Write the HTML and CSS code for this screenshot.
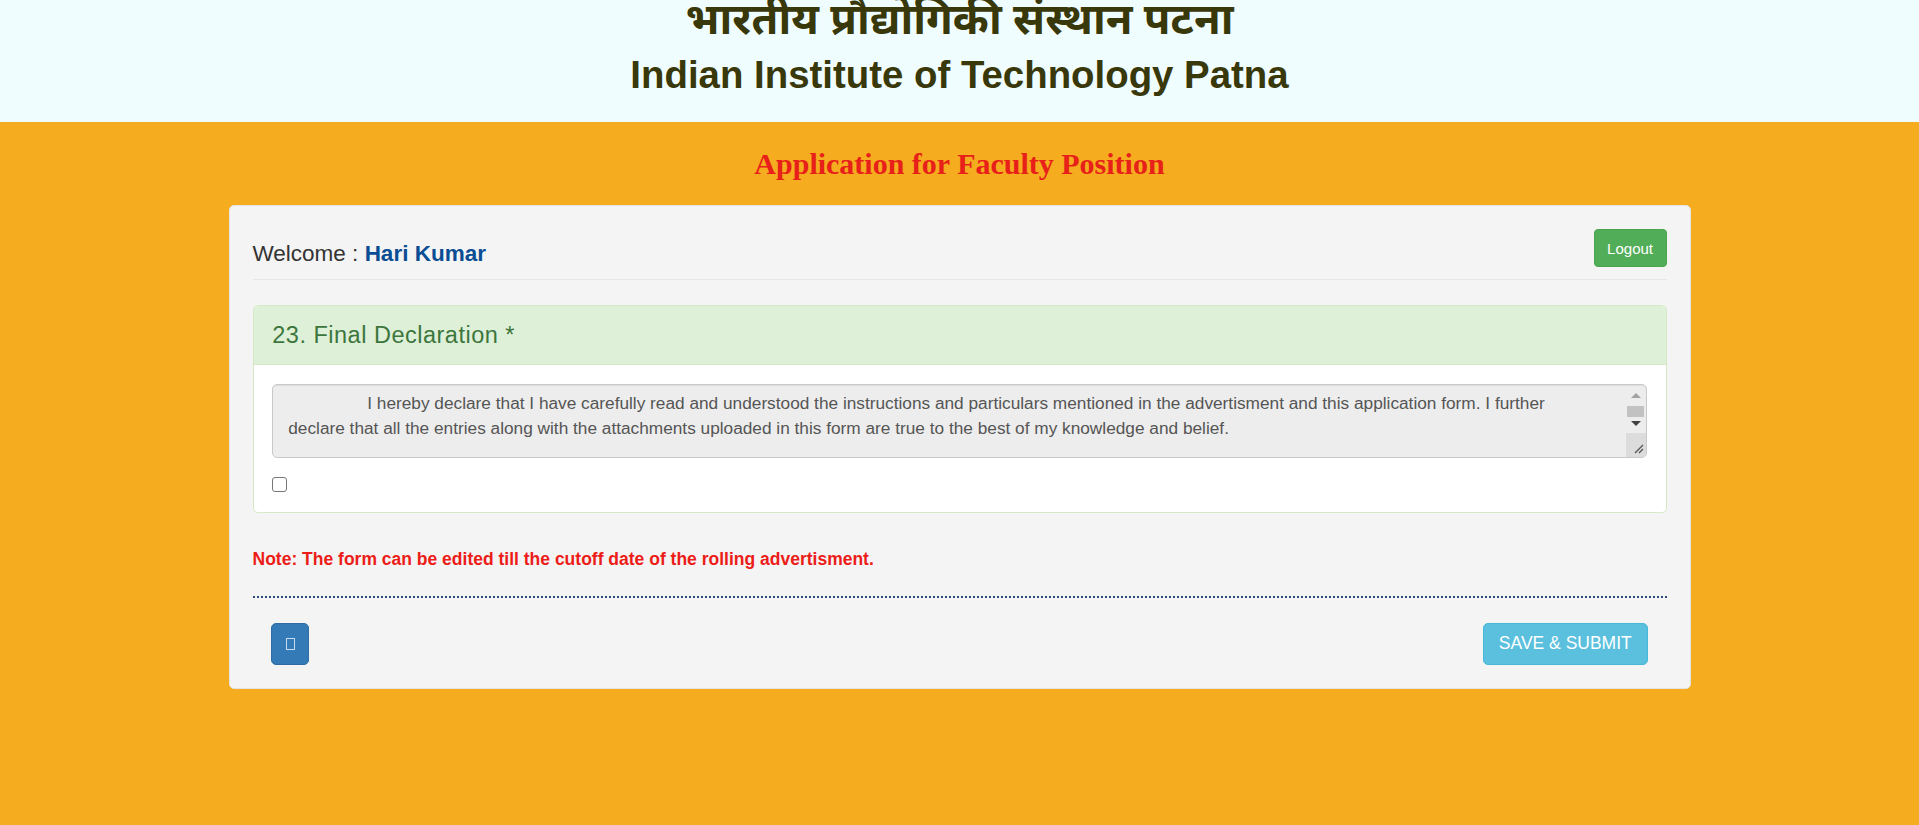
FILE: index.html
```html
<!DOCTYPE html>
<html lang="en">
<head>
<meta charset="utf-8">
<title>Application for Faculty Position - IIT Patna</title>
<link rel="stylesheet" href="styles.css">
</head>
<body>
<header class="top">
  <div class="hindi">भारतीय प्रौद्योगिकी संस्थान पटना</div>
  <div class="eng">Indian Institute of Technology Patna</div>
</header>
<h1 class="title">Application for Faculty Position</h1>
<main class="card">
  <div class="welcome-row">
    <div class="welcome">Welcome : <b class="name">Hari Kumar</b></div>
    <button class="btn-logout">Logout</button>
  </div>
  <hr class="sep">
  <section class="panel">
    <div class="panel-heading">23. Final Declaration *</div>
    <div class="panel-body">
      <div class="ta">
        <div class="ta-text">I hereby declare that I have carefully read and understood the instructions and particulars mentioned in the advertisment and this application form. I further declare that all the entries along with the attachments uploaded in this form are true to the best of my knowledge and belief.</div>
        <div class="ta-scroll">
          <div class="sb-btn sb-up"><span class="tri-up"></span></div>
          <div class="sb-thumb"></div>
          <div class="sb-btn sb-down"><span class="tri-down"></span></div>
          <div class="sb-space"></div>
          <div class="sb-corner">
            <svg width="12" height="12" viewBox="0 0 12 12"><path d="M11 3 L3 11 M11 7 L7 11" stroke="#555" stroke-width="1.3" fill="none"/></svg>
          </div>
        </div>
      </div>
      <input type="checkbox" class="chk">
    </div>
  </section>
  <p class="note">Note: The form can be edited till the cutoff date of the rolling advertisment.</p>
  <div class="dots"></div>
  <div class="actions">
    <button class="btn-back"><span class="tofu"></span></button>
    <button class="btn-save">SAVE &amp; SUBMIT</button>
  </div>
</main>
</body>
</html>
```
FILE: styles.css
```css
html, body {
  margin: 0;
  padding: 0;
}
body {
  background: #f5ac1e;
  font-family: "Liberation Sans", Arial, Helvetica, sans-serif;
  color: #333;
  height: 825px;
  overflow: hidden;
}
.top {
  background: #f0fdff;
  height: 122px;
  text-align: center;
  overflow: hidden;
  color: #38380a;
  font-weight: bold;
}
.hindi {
  font-family: "Noto Sans Devanagari", "Lohit Devanagari", "FreeSans", "Mangal", sans-serif;
  font-size: 43.5px;
  height: 44px;
  line-height: 44px;
  margin-top: 2px;
}
.eng {
  font-size: 38.4px;
  line-height: 37.5px;
  margin-top: 10px;
}
.title {
  margin: 22px 0 21px;
  text-align: center;
  font-family: "Liberation Serif", "Times New Roman", serif;
  font-weight: bold;
  font-size: 30px;
  line-height: 40px;
  color: #e8201a;
}
.card {
  width: 1462px;
  box-sizing: border-box;
  margin: 0 auto;
  background: #f4f4f4;
  border: 1px solid #e3e3e3;
  border-radius: 5px;
  padding: 23px 23px 23px;
}
.welcome-row {
  display: flex;
  justify-content: space-between;
  align-items: center;
  height: 38px;
}
.welcome {
  font-size: 22.5px;
  color: #333;
  padding-top: 11px;
}
.name {
  color: #0a4d94;
}
.btn-logout {
  height: 37.5px;
  padding: 0 12.5px;
  font-family: inherit;
  font-size: 15px;
  color: #fff;
  background: #52ad58;
  border: 1px solid #4aa450;
  border-radius: 4px;
}
.sep {
  margin: 12px 0 25px;
  border: 0;
  border-top: 1px solid #e6e6e6;
  height: 0;
}
.panel {
  background: #fff;
  border: 1px solid #d6e9c6;
  border-radius: 5px;
  overflow: hidden;
}
.panel-heading {
  background: #dff0d8;
  color: #3c763d;
  height: 58px;
  display: flex;
  align-items: center;
  padding: 0 18.75px;
  font-size: 23.5px;
  letter-spacing: 0.5px;
  border-bottom: 1px solid #d6e9c6;
}
.panel-body {
  padding: 18.75px 18.75px 20px;
}
.ta {
  display: flex;
  height: 74px;
  box-sizing: border-box;
  background: #ededed;
  border: 1px solid #c9c9c9;
  border-radius: 5px;
  box-shadow: inset 0 1px 1px rgba(0,0,0,.075);
  overflow: hidden;
}
.ta-text {
  flex: 1;
  padding: 6.5px 40px 0 15px;
  font-size: 17.25px;
  line-height: 25px;
  color: #555;
  text-indent: 79px;
  overflow: hidden;
}
.ta-scroll {
  width: 20px;
  display: flex;
  flex-direction: column;
  align-items: stretch;
}
.sb-btn {
  display: flex;
  align-items: center;
  justify-content: center;
}
.sb-up {
  height: 21px;
}
.sb-down {
  height: 14px;
}
.tri-up {
  width: 0;
  height: 0;
  border-left: 5px solid transparent;
  border-right: 5px solid transparent;
  border-bottom: 5px solid #a3a3a3;
}
.tri-down {
  width: 0;
  height: 0;
  border-left: 5px solid transparent;
  border-right: 5px solid transparent;
  border-top: 5px solid #404040;
}
.sb-thumb {
  height: 11px;
  margin: 0 2px 0 1px;
  background: #c2c2c2;
}
.sb-space {
  flex: 1;
}
.sb-corner {
  height: 21px;
  background: #dcdcdc;
  display: flex;
  align-items: flex-end;
  justify-content: flex-end;
  padding: 0 2px 3px 0;
}
.chk {
  appearance: none;
  -webkit-appearance: none;
  display: block;
  width: 15px;
  height: 15px;
  margin: 19px 0 0;
  border: 1.5px solid #767676;
  border-radius: 3px;
  background: #fff;
  box-sizing: border-box;
}
.note {
  margin: 34px 0 0;
  font-size: 17.5px;
  line-height: 25px;
  font-weight: bold;
  color: #ec1c18;
}
.dots {
  margin-top: 24px;
  border-top: 2px dotted #2d4a7a;
}
.actions {
  display: flex;
  justify-content: space-between;
  align-items: center;
  padding: 0 18.75px;
  margin-top: 25px;
}
.btn-back {
  width: 38px;
  height: 42px;
  background: #337ab7;
  border: 1px solid #2e6da4;
  border-radius: 5px;
  display: flex;
  align-items: center;
  justify-content: center;
  padding: 0;
}
.tofu {
  width: 9px;
  height: 12px;
  box-sizing: border-box;
  border: 1.5px solid #c6dcf2;
}
.btn-save {
  height: 42px;
  padding: 0 15px;
  background: #5bc0de;
  border: 1px solid #46b8da;
  border-radius: 5px;
  color: #fff;
  font-family: inherit;
  font-size: 17.5px;
}
```
